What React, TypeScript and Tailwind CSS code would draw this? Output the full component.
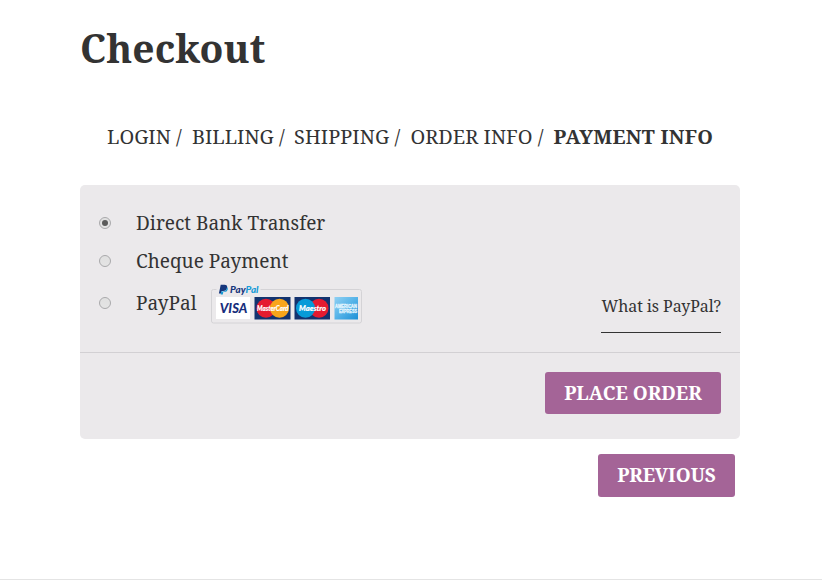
import React from "react";

type RadioProps = { label: string; checked?: boolean };

function Radio({ label, checked = false }: RadioProps) {
  return (
    <span
      role="radio"
      aria-label={label}
      aria-checked={checked}
      className="flex h-3 w-3 shrink-0 items-center justify-center rounded-full border border-[#a9a9ab] bg-linear-to-b from-[#e0e0e0] to-[#e4e4e4]"
    >
      {checked && <span className="h-1.5 w-1.5 rounded-full bg-[#5b5b5b]" />}
    </span>
  );
}

function Cards() {
  return (
    <svg width="156" height="42" viewBox="208 283 156 42" className="shrink-0" aria-label="PayPal payment cards">
      <defs>
        <linearGradient id="amex" x1="0" y1="0" x2="1" y2="1">
          <stop offset="0" stopColor="#8fd0f3" />
          <stop offset="0.5" stopColor="#55b3e8" />
          <stop offset="1" stopColor="#1c8fd6" />
        </linearGradient>
      </defs>
      <path d="M216.500 289.500H213.500Q211.500 289.500 211.500 291.500V321Q211.500 323 213.500 323H359.500Q361.500 323 361.500 321V291.500Q361.500 289.500 359.500 289.500H260.500" fill="none" stroke="#d4d3d6" />
      <path d="M220.700 284.800H224.500Q227.700 284.800 227.100 288Q226.400 291 223.200 291H221.700L221.200 293.500H218.900Z" fill="#15367c" />
      <path d="M227.100 287Q228.200 288 227.700 289.700Q227 292 224.300 292H223.300L222.800 294.600H220.700L221.200 291.500H223.400Q226.300 291.300 227.100 287Z" fill="#179bd7" />
      <text x="230" y="292.800" fontFamily="Lato, sans-serif" fontSize="8.500" fontWeight="900" fontStyle="italic" textLength="28.500" lengthAdjust="spacingAndGlyphs"><tspan fill="#15367c">Pay</tspan><tspan fill="#179bd7">Pal</tspan></text>
      <rect x="216" y="297" width="34" height="22" fill="#fff" />
      <text x="219.800" y="312.700" fontFamily="Lato, sans-serif" fontSize="12.800" fontWeight="900" fontStyle="italic" fill="#182e7c" textLength="27.500" lengthAdjust="spacingAndGlyphs">VISA</text>
      <rect x="254.500" y="297" width="36" height="22.500" fill="#13336f" />
      <circle cx="266" cy="308.300" r="9.500" fill="#e51b30" />
      <circle cx="279.500" cy="308.300" r="9.500" fill="#f8a51b" />
      <text x="257" y="311" fontFamily="Lato, sans-serif" fontSize="7.800" fontWeight="900" fontStyle="italic" fill="#fff" stroke="#fff" strokeWidth="0.200" textLength="31.500" lengthAdjust="spacingAndGlyphs">MasterCard</text>
      <rect x="294.500" y="297" width="35.500" height="22.500" fill="#13336f" />
      <circle cx="319" cy="308.300" r="9.500" fill="#e51b30" />
      <circle cx="305.500" cy="308.300" r="9.500" fill="#079bd8" />
      <text x="299" y="311" fontFamily="Lato, sans-serif" fontSize="7.800" fontWeight="900" fontStyle="italic" fill="#fff" stroke="#fff" strokeWidth="0.200" textLength="27" lengthAdjust="spacingAndGlyphs">Maestro</text>
      <rect x="334.500" y="297" width="23.500" height="22.500" fill="url(#amex)" />
      <g fontFamily="'Liberation Sans', sans-serif" fontWeight="700" fontSize="5" fill="#e8f7ff" stroke="#e8f7ff" strokeWidth="0.300">
        <text x="335" y="308.300" textLength="22" lengthAdjust="spacingAndGlyphs">AMERICAN</text>
        <text x="339" y="313.300" textLength="18" lengthAdjust="spacingAndGlyphs">EXPRESS</text>
      </g>
    </svg>
  );
}

export default function App() {
  return (
    <div className="flex h-[580px] w-[822px] flex-col border-b border-[#e4e4e4] bg-white pl-20 font-['Noto_Serif','Droid_Serif','DejaVu_Serif_Condensed','DejaVu_Serif',serif] text-[#333]">
      <h1 className="mt-[23px] h-[50px] self-start text-[39px] leading-[50px] font-bold tracking-[0.080px] whitespace-nowrap">Checkout</h1>
      <nav className="mt-[49px] ml-[27px] flex h-[30px] text-[19.900px] leading-[30px] whitespace-nowrap">
        <span className="w-[85px]">LOGIN /</span>
        <span className="w-[102px]">BILLING /</span>
        <span className="w-[116.500px] tracking-[0.080px]">SHIPPING /</span>
        <span className="w-[143px] tracking-[0.030px]">ORDER INFO /</span>
        <strong className="w-[160px] tracking-[0.270px]">PAYMENT INFO</strong>
      </nav>
      <main className="mt-[33px] h-[254px] w-[660px] rounded-[5px] bg-[#ebe9eb]">
        <div className="flex h-[168px] flex-col border-b border-[#d2d0d3] pt-[19px] pr-[19px] pl-[19px] text-[19px] whitespace-nowrap">
          <div className="flex h-[38px] items-center gap-[25px]">
            <Radio label="Direct Bank Transfer" checked />
            <span>Direct Bank Transfer</span>
          </div>
          <div className="flex h-[38px] items-center gap-[25px]">
            <Radio label="Cheque Payment" />
            <span>Cheque Payment</span>
          </div>
          <div className="flex h-[53px] items-start">
            <div className="mt-1 flex h-[38px] items-center gap-[25px]">
              <Radio label="PayPal" />
              <span className="w-[72px]">PayPal</span>
            </div>
            <div className="mt-[3px]"><Cards /></div>
            <a className="ml-auto h-[53px] w-[120px] border-b border-[#333] pl-[0.500px] text-[16px] leading-[52px] tracking-[-0.080px]">What is PayPal?</a>
          </div>
        </div>
        <div className="flex justify-end pt-[19px] pr-[19px]">
          <button className="h-[42px] w-[176px] rounded-[3px] bg-[#a46497] text-[19px] font-bold whitespace-nowrap text-white">PLACE ORDER</button>
        </div>
      </main>
      <div className="mt-[15px] flex w-[655px] justify-end">
        <button className="h-[43px] w-[137px] rounded-[3px] bg-[#a46497] text-[19px] font-bold whitespace-nowrap text-white">PREVIOUS</button>
      </div>
    </div>
  );
}
